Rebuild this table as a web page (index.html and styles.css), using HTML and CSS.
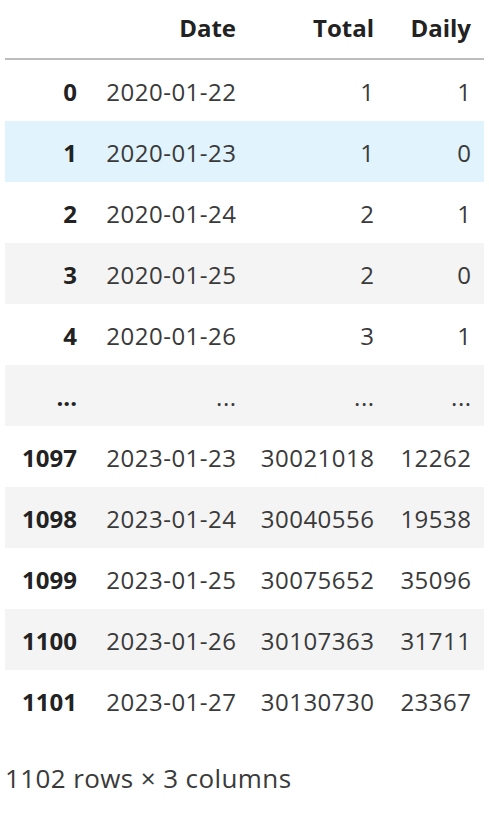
FILE: index.html
```html
<!DOCTYPE html>
<html>
<head>
<meta charset="utf-8">
<link rel="stylesheet" href="styles.css">
</head>
<body>
<div class="output">
  <table class="dataframe">
    <colgroup>
      <col class="c-idx"><col class="c-date"><col class="c-total"><col class="c-daily">
    </colgroup>
    <thead>
      <tr><th></th><th>Date</th><th>Total</th><th>Daily</th></tr>
    </thead>
    <tbody>
      <tr><th>0</th><td>2020-01-22</td><td>1</td><td>1</td></tr>
      <tr class="hover"><th>1</th><td>2020-01-23</td><td>1</td><td>0</td></tr>
      <tr><th>2</th><td>2020-01-24</td><td>2</td><td>1</td></tr>
      <tr><th>3</th><td>2020-01-25</td><td>2</td><td>0</td></tr>
      <tr><th>4</th><td>2020-01-26</td><td>3</td><td>1</td></tr>
      <tr><th>...</th><td>...</td><td>...</td><td>...</td></tr>
      <tr><th>1097</th><td>2023-01-23</td><td>30021018</td><td>12262</td></tr>
      <tr><th>1098</th><td>2023-01-24</td><td>30040556</td><td>19538</td></tr>
      <tr><th>1099</th><td>2023-01-25</td><td>30075652</td><td>35096</td></tr>
      <tr><th>1100</th><td>2023-01-26</td><td>30107363</td><td>31711</td></tr>
      <tr><th>1101</th><td>2023-01-27</td><td>30130730</td><td>23367</td></tr>
    </tbody>
  </table>
  <p class="shape">1102 rows × 3 columns</p>
</div>
</body>
</html>
```
FILE: styles.css
```css
html, body {
  margin: 0;
  padding: 0;
  background: #ffffff;
}
body {
  font-family: "Open Sans", "Noto Sans", sans-serif;
  font-size: 24px;
  color: #3a3a3a;
}
.output {
  padding-left: 5px;
}
.dataframe {
  border-collapse: collapse;
  table-layout: fixed;
  width: 479px;
}
.c-idx { width: 85px; }
.c-date { width: 159px; }
.c-total { width: 138px; }
.c-daily { width: 97px; }

.dataframe th,
.dataframe td {
  text-align: right;
  line-height: 33px;
  padding: 15px 13px 13px 0;
  white-space: nowrap;
  font-weight: 400;
}
.dataframe td {
  letter-spacing: 0.5px;
  padding-right: 12.5px;
}
.dataframe th {
  font-weight: 700;
  color: #222222;
}
.dataframe thead th {
  padding-top: 11px;
  padding-bottom: 14px;
  border-bottom: 2px solid #bdbdbd;
}
.dataframe tbody tr:nth-child(even) {
  background: #f4f4f4;
}
.dataframe tbody tr.hover {
  background: #e1f3fc;
}
.shape {
  margin: 31px 0 0 0;
  font-size: 26px;
  letter-spacing: 0.4px;
  line-height: 33px;
  color: #3a3a3a;
}
```
